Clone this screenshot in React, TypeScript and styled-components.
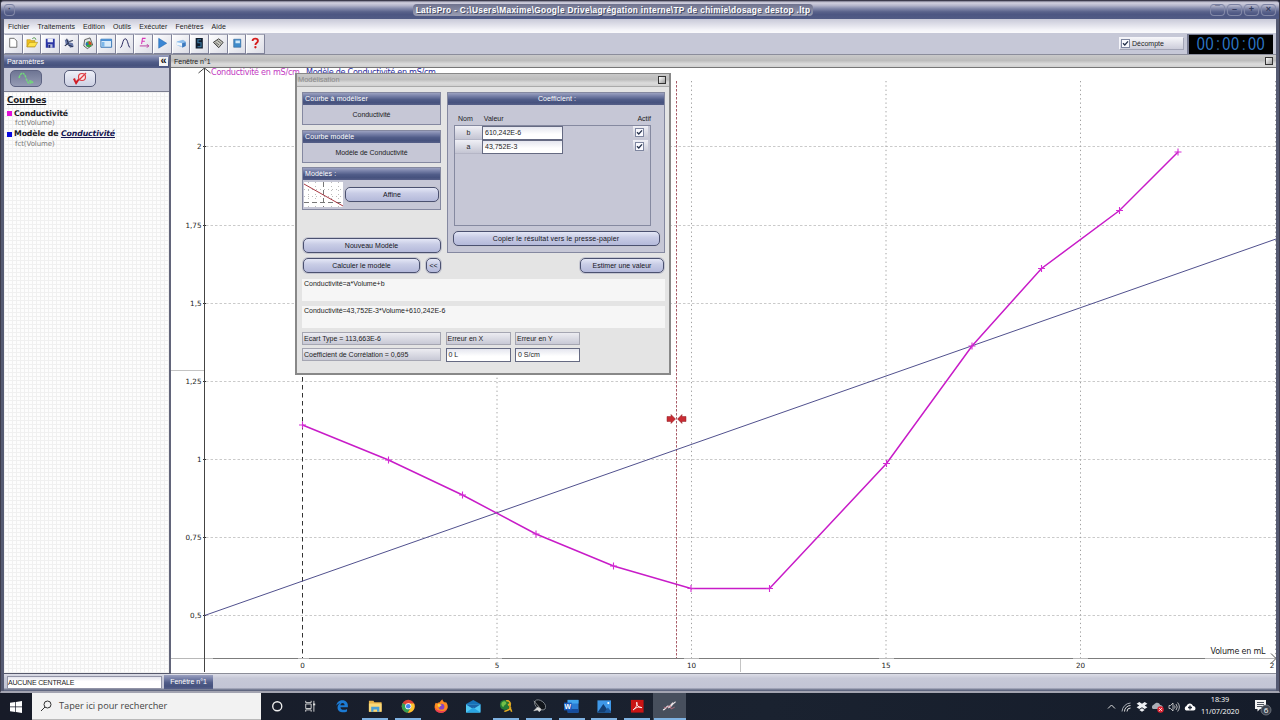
import React from 'react';
import styled, { createGlobalStyle } from 'styled-components';

const sans = '"Liberation Sans", Arial, sans-serif';
const wide = '"DejaVu Sans", Verdana, sans-serif';
const segoe = '"Open Sans", "Noto Sans", sans-serif';
const steel = 'linear-gradient(#9ba1c0 0, #7780a8 25%, #505c88 55%, #46527e 80%, #565f88 100%)';
const silver = 'linear-gradient(#c9c9c9, #bcbcbc 45%, #dcdcdc 75%, #d0d0d0)';

const Global = createGlobalStyle`
  * { box-sizing: border-box; }
  html, body { margin: 0; padding: 0; overflow: hidden; background: #1a1e2a; }
  body { font: 7px/1 ${sans}; color: #1c1c24; white-space: nowrap; }
  svg { display: block; }
`;

const Screen = styled.div`
  width: 1280px;
  height: 720px;
  display: flex;
  flex-direction: column;
  overflow: hidden;
`;

const Frame = styled.div`
  height: 693px;
  display: flex;
  flex-direction: column;
  background: #555a72;
  border: 1px solid #3c3b4c;
  border-bottom: 2px solid #a3a4b1;
  border-radius: 4px 4px 0 0;
  overflow: hidden;
`;

const TitleBar = styled.header`
  height: 18px;
  flex: none;
  display: flex;
  align-items: center;
  padding: 0 3px;
  background: linear-gradient(#76768a 0, #d2d1df 10%, #b5b6cb 25%, #8389aa 42%, #59628b 60%, #4c5682 75%, #515b85 100%);
`;

const TitleLeft = styled.div`
  width: 409px;
  flex: none;
`;

const TitleButtons = styled.div`
  margin-left: auto;
  display: flex;
  gap: 2px;
`;

const TitleText = styled.div`
  width: 400px;
  height: 12px;
  border-radius: 4px;
  background: linear-gradient(#70738e, #9a9db2);
  color: #fff;
  font: bold 8.3px/12px ${sans};
  letter-spacing: 0.33px;
  text-align: center;
  text-shadow: 1px 1px 0 #454b68;
`;

const TitleButton = styled.span<{ $w?: number }>`
  display: block;
  width: ${(p) => p.$w ?? 15}px;
  height: 12px;
  border: 1px solid #8389a8;
  border-top-color: #7a80a1;
  border-radius: 4px;
  color: #353d60;
  font: bold 9px/9px ${sans};
  text-align: center;
`;

const Body = styled.div`
  flex: 1;
  min-height: 0;
  display: flex;
  flex-direction: column;
  margin: 0 3px 0 3px;
  background: #c6c8d7;
`;

const MenuBar = styled.nav`
  height: 14px;
  flex: none;
  display: flex;
  align-items: center;
  gap: 8px;
  padding-left: 4px;
  background: linear-gradient(#c8c9d8, #f3f3f8 75%, #fafafc);
  letter-spacing: 0.07px;
`;

const ToolBar = styled.div`
  height: 22px;
  flex: none;
  display: flex;
  align-items: center;
  border-bottom: 1px solid #8b8d9b;
`;

const ToolButton = styled.div`
  width: 18.65px;
  height: 20px;
  display: flex;
  align-items: center;
  justify-content: center;
  background: linear-gradient(135deg, #fdfdfe, #dcdde6);
  border: 1px solid #80839a;
  border-left-color: #fff;
  border-top-color: #a3a5b5;
`;

const Countdown = styled.label`
  margin-left: auto;
  width: 65px;
  height: 13px;
  display: flex;
  align-items: center;
  gap: 2px;
  padding-left: 1px;
  border: 1px solid #a3a5b6;
  border-top-color: #f5f5fa;
  border-left-color: #f5f5fa;
  background: linear-gradient(#f4f4f8, #cccdda);
`;

const Box = styled.span`
  width: 9px;
  height: 9px;
  border: 1px solid #7e86a0;
  background: #fafaff;
  display: flex;
  align-items: center;
  justify-content: center;
`;

const Clock = styled.div`
  width: 86px;
  height: 20px;
  margin: 0 3px 0 3px;
  background: #000;
  border-left: 2px solid #777b91;
  border-top: 1px solid #777b91;
  display: flex;
  align-items: center;
  justify-content: center;
`;

const ClockDigits = styled.span`
  font: 14.5px/15px ${sans};
  letter-spacing: 0.6px;
  color: #2e78c8;
  transform: scaleY(1.26);
  i { font-style: normal; padding: 0 1.6px 0 2px; color: #26609c; }
`;

const Main = styled.div`
  flex: 1;
  min-height: 0;
  display: flex;
`;

const SidePanel = styled.aside`
  width: 167px;
  flex: none;
  display: flex;
  flex-direction: column;
  border-right: 2px solid #62657a;
  border-bottom: 1px solid #55586c;
`;

const SideHeader = styled.div`
  height: 13px;
  flex: none;
  display: flex;
  align-items: center;
  justify-content: space-between;
  padding: 0 1px 0 3px;
  background: ${steel};
  color: #fff;
  font-size: 7.2px;
`;

const Collapse = styled.span`
  width: 9px;
  height: 9px;
  background: #f4f4f4;
  color: #111;
  font: bold 11px/7px ${sans};
  text-align: center;
`;

const ModeRow = styled.div`
  height: 24px;
  flex: none;
  display: flex;
  gap: 22px;
  padding: 2px 0 0 6px;
  border-bottom: 1px solid #7b7e90;
`;

const ModeButton = styled.div<{ $on?: boolean }>`
  width: 32px;
  height: 17px;
  border-radius: 5px;
  border: 1.5px solid ${(p) => (p.$on ? '#5d6382' : '#555b78')};
  background: ${(p) => (p.$on ? 'linear-gradient(#6f7694, #949ab3)' : 'linear-gradient(#eef0f8, #ccd0e2)')};
  display: flex;
  align-items: center;
  justify-content: center;
`;

const CurveList = styled.div`
  flex: 1;
  padding: 4px 0 0 3px;
  background-color: #fdfdfd;
  background-image: linear-gradient(#f0f0f0 1px, transparent 1px), linear-gradient(90deg, #f0f0f0 1px, transparent 1px);
  background-size: 4px 4px;
  font-family: ${wide};
`;

const CurveHeading = styled.div`
  font: bold 8.8px/9px ${wide};
  text-decoration: underline;
  letter-spacing: -0.2px;
  margin-bottom: 3px;
`;

const CurveName = styled.div`
  display: flex;
  align-items: center;
  gap: 2px;
  height: 11px;
  font-weight: bold;
  font-size: 7.8px;
  letter-spacing: -0.13px;
  i { color: #161652; text-decoration: underline; }
`;

const Swatch = styled.span<{ $color: string }>`
  width: 5px;
  height: 5px;
  background: ${(p) => p.$color};
`;

const CurveSource = styled.div`
  height: 9.7px;
  padding-left: 8px;
  font-size: 7px;
  line-height: 8px;
  letter-spacing: -0.08px;
  color: #777;
`;

const PlotWindow = styled.section`
  flex: 1;
  min-width: 0;
  display: flex;
  flex-direction: column;
  background: #fff;
  border-bottom: 1px solid #8b8d98;
`;

const PlotTitle = styled.div`
  height: 13px;
  flex: none;
  display: flex;
  align-items: center;
  justify-content: space-between;
  padding: 0 3px 0 3px;
  background: ${silver};
  border-bottom: 1px solid #777;
`;

const WindowSquare = styled.span`
  width: 8px;
  height: 8px;
  border: 1px solid #333;
  background: linear-gradient(135deg, #fff, #9a9a9a);
`;

const StatusBar = styled.footer`
  height: 17px;
  flex: none;
  display: flex;
  align-items: flex-start;
  background: linear-gradient(#dcdde7 0, #c6c8d7 25%, #c3c5d5 80%, #606780 95%);
`;

const StatusField = styled.div`
  width: 155px;
  height: 13px;
  margin: 2px 2px 0 3px;
  border: 1px solid #9193a6;
  background: linear-gradient(#e4e4ee, #fff 40%);
  font-size: 7px;
  letter-spacing: -0.18px;
  line-height: 11px;
`;

const StatusTab = styled.div`
  width: 49px;
  height: 14px;
  margin-top: 1px;
  background: ${steel};
  color: #fff;
  text-align: center;
  line-height: 13px;
`;

/* Floating modelling dialog */
const Dialog = styled.div`
  position: absolute;
  left: 295px;
  top: 73px;
  width: 376px;
  height: 302px;
  display: flex;
  flex-direction: column;
  background: #e4e4e4;
  border: 2px solid #888;
  border-top-width: 1px;
`;

const DialogTitle = styled.div`
  height: 13px;
  flex: none;
  display: flex;
  align-items: center;
  justify-content: space-between;
  padding: 0 3px 0 1px;
  background: ${silver};
  border-bottom: 1px solid #aaa;
  color: #8b8b8b;
  font-size: 7.4px;
`;

const DialogBody = styled.div`
  flex: 1;
  padding: 5px 4px 0 5px;
`;

const Columns = styled.div`
  display: flex;
  justify-content: space-between;
  height: 161px;
`;

const LeftColumn = styled.div`
  width: 139px;
  display: flex;
  flex-direction: column;
`;

const Group = styled.div<{ $h: number; $w?: number; $gap?: number }>`
  width: ${(p) => p.$w ?? 139}px;
  height: ${(p) => p.$h}px;
  margin-bottom: ${(p) => p.$gap ?? 0}px;
  border: 1px solid #8488a0;
  background: #c6c7d6;
  display: flex;
  flex-direction: column;
`;

const GroupTitle = styled.div<{ $center?: boolean }>`
  height: 12px;
  flex: none;
  padding-left: 2px;
  background: ${steel};
  color: #fff;
  line-height: 12px;
  letter-spacing: 0.1px;
  text-align: ${(p) => (p.$center ? 'center' : 'left')};
`;

const GroupValue = styled.div`
  flex: 1;
  display: flex;
  align-items: center;
  justify-content: center;
  letter-spacing: -0.05px;
`;

const ModelRow = styled.div`
  flex: 1;
  display: flex;
  align-items: center;
  gap: 2px;
  padding-left: 1px;
`;

const ButtonSlot = styled.div<{ $inset?: boolean }>`
  display: flex;
  justify-content: center;
  padding-bottom: ${(p) => (p.$inset ? 6 : 0)}px;
`;

const Pill = styled.button<{ $w: number; $spread?: number }>`
  width: ${(p) => p.$w}px;
  height: 15px;
  flex: none;
  padding: 0;
  border: 1.5px solid #4b5170;
  border-radius: 5px;
  background: linear-gradient(#e4e7f6, #c9cde6 40%, #b4b9da);
  box-shadow: 0 0 0 1px #c4c5d0;
  color: #15151c;
  font: 7px/12px ${sans};
  letter-spacing: ${(p) => p.$spread ?? 0.03}px;
  text-align: center;
`;

const Spacer = styled.div`
  flex: 1;
`;

const CoeffHead = styled.div`
  display: flex;
  height: 20px;
  padding: 10px 13px 0 10px;
  span:nth-child(2) { margin-left: 11px; flex: 1; }
`;

const CoeffTable = styled.div`
  width: 197px;
  height: 101px;
  margin-left: 6px;
  border: 1px solid #8589a0;
`;

const CoeffRow = styled.div`
  height: 14px;
  display: flex;
  justify-content: space-between;
`;

const Key = styled.div`
  width: 27px;
  height: 14px;
  background: linear-gradient(#f0f0f6, #c4c5d3);
  line-height: 13px;
  text-align: center;
  border-bottom: 1px solid #b5b6c6;
`;

const Field = styled.div<{ $w: number }>`
  width: ${(p) => p.$w}px;
  height: 14px;
  padding-left: 2px;
  border: 1px solid #656a82;
  background: linear-gradient(#e5e6ef, #fff 60%);
  line-height: 12px;
`;

const CheckCell = styled.div`
  width: 15px;
  margin-left: auto;
  margin-right: 2px;
  height: 13px;
  display: flex;
  align-items: center;
  padding-left: 2px;
  background: linear-gradient(#f0f0f6, #c4c5d3);
`;

const ActionRow = styled.div`
  height: 15px;
  margin: 5px 1px 6px 1px;
  display: flex;
  gap: 6px;
`;

const Formula = styled.div`
  height: 22px;
  margin-bottom: 4.5px;
  padding: 1px 2px;
  background: #f6f6f6;
  line-height: 8px;
`;

const Results = styled.div`
  display: grid;
  grid-template-columns: 139px 65px 65px;
  column-gap: 4.5px;
  row-gap: 3px;
  margin-top: 4px;
`;

const Result = styled.div`
  height: 13px;
  padding-left: 1px;
  border: 1px solid #a5a6b2;
  background: linear-gradient(#ececf1, #c8c9d6);
  line-height: 11px;
`;

/* Windows taskbar */
const TaskBar = styled.div`
  height: 27px;
  flex: none;
  display: flex;
  background: linear-gradient(90deg, #171b28, #1a2230 60%, #151c2a);
  color: #fff;
  font-family: ${segoe};
`;

const Start = styled.div`
  width: 32px;
  display: flex;
  align-items: center;
  justify-content: center;
`;

const Search = styled.div`
  width: 229px;
  display: flex;
  align-items: center;
  gap: 7px;
  padding-left: 8px;
  background: #f2f2f2;
  border-bottom: 1px solid #b9b9b9;
  color: #444;
  font-size: 9.2px;
`;

const TaskItem = styled.div<{ $open?: boolean; $active?: boolean }>`
  width: 32.7px;
  display: flex;
  align-items: center;
  justify-content: center;
  background-color: ${(p) => (p.$active ? '#474f5d' : 'transparent')};
  background-image: ${(p) => (p.$open ? 'linear-gradient(#7fb2e2, #7fb2e2)' : 'none')};
  background-size: ${(p) => (p.$active ? '32px' : '26px')} 2px;
  background-repeat: no-repeat;
  background-position: center bottom;
`;

const Tray = styled.div`
  margin-left: auto;
  display: flex;
  align-items: center;
  gap: 4px;
`;

const DateTime = styled.div`
  width: 42px;
  margin: 0 1px 3px -1px;
  text-align: center;
  font-size: 7.3px;
  line-height: 12px;
  letter-spacing: -0.05px;
`;

const Notice = styled.div`
  width: 34px;
  padding-left: 8px;
`;

const Check = () => (
  <svg width="7" height="7" viewBox="0 0 7 7"><path d="M1 3.2 2.8 5 6 1.4" fill="none" stroke="#24304a" strokeWidth="1.3" /></svg>
);

const toolIcons: React.ReactNode[] = [
  <path d="M3 1.5h5l3 3v7H3z" fill="#fff" stroke="#555" strokeWidth=".9" />,
  <><path d="M1 3h4l1 1h4v7H1z" fill="#f0c020" stroke="#b08a10" strokeWidth=".6" /><path d="M1 11 4 6h9l-3 5z" fill="#ffe34a" stroke="#a58210" strokeWidth=".6" /><path d="M7 2c2-2 4-1 4 1" fill="none" stroke="#3a8a30" strokeWidth="1" /></>,
  <><path d="M2 2h10v10H2z" fill="#2b35a5" /><path d="M4 2h6v4H4z" fill="#e9ecf8" /><path d="M4.500 8h5v4h-5z" fill="#b4bddd" /><path d="M5 9h2v3H5z" fill="#1b2170" /></>,
  <><path d="m2 3 4 0 1 3 4 1 1 4-4 1-2-3-3-1z" fill="#6878a8" /><path d="m4 2 2 5-4 3M7 5l4-1M6 9l5 2" stroke="#27304f" fill="none" strokeWidth="1.200" /></>,
  <><path d="M3 3 9 1l3 8-6 4-4-3z" fill="#dfe2e4" stroke="#333" strokeWidth=".8" /><circle cx="7.500" cy="8" r="3.300" fill="#39a844" /><path d="M7.500 8V4.700A3.300 3.300 0 0 1 10.500 9z" fill="#e3401f" /><path d="M7.500 8 4.500 9.500A3.300 3.300 0 0 1 5 6z" fill="#2868c8" /></>,
  <><path d="M1 2.500h12v9H1z" fill="#d9ebfa" stroke="#2b6cae" /><path d="M1 2.500h12v2H1z" fill="#4a90d5" /><path d="M2 5.500h3v5.500H2z" fill="#7db7ea" /></>,
  <path d="M1.500 12C4 11 4 2 7 2s3 9 5.500 10" fill="none" stroke="#26265c" strokeWidth="1.100" />,
  <><path d="M4 8 5 1.500h3.500M4.700 4.700h3" fill="none" stroke="#d838b8" strokeWidth="1.200" /><path d="M2 10h10M10 8l2 2-2 2" fill="none" stroke="#b52d98" strokeWidth="1" /></>,
  <path d="M3 1.500 12 7l-9 5.500z" fill="#3a86d4" stroke="#2567ac" strokeWidth=".6" />,
  <><path d="M2 5 9 3l3 2v5l-6 1-4-2z" fill="#8dbdec" /><path d="m2 6 6 1v3l-6-1z" fill="#f1f7fc" /><path d="m8 7 4-1v4l-4 2z" fill="#3d79be" /></>,
  <><path d="M3 1h8v12H3z" fill="#101c2c" /><path d="M9 3H5.500v3.500H9V11H5" fill="none" stroke="#3c7da8" strokeWidth="1.200" /></>,
  <><path d="m1.500 6 6-4 5 4-5 6z" fill="#c8c8be" stroke="#333" /><path d="m4 6 4 3M6 4l4 3M3 7l4 4" stroke="#555" strokeWidth=".9" /></>,
  <><path d="M3 2.500h8v9H3z" fill="#3f8bca" stroke="#285c90" strokeWidth=".6" /><path d="M5 4h5v3H5z" fill="#cfe8fa" /></>,
  <><path d="M4 4.500C4 1 10 1 10 4.500 10 6.500 7.200 6.500 7.200 9" fill="none" stroke="#d51d1d" strokeWidth="2.100" /><circle cx="7.200" cy="11.500" r="1.300" fill="#d51d1d" /></>,
];

const points: [number, number][] = [
  [302.5, 425], [388.5, 460], [462.5, 495], [536, 534], [613.5, 566], [691, 588.5],
  [769.5, 588.5], [886.5, 463.5], [972, 346], [1041.5, 268.5], [1119.5, 210.5], [1178, 152],
];
const yTicks: [string, number][] = [['2', 146.5], ['1,75', 225.5], ['1,5', 303.5], ['1,25', 381.5], ['1', 459.5], ['0,75', 537.5], ['0,5', 615.5]];
const xTicks: [string, number][] = [['0', 302.5], ['5', 497], ['10', 691.5], ['15', 886], ['20', 1080.5], ['2', 1272]];

const Chart = () => (
  <svg width="1105" height="604" viewBox="171 68 1105 604" fontFamily={wide} fontSize="7.2">
    {yTicks.map(([t, y]) => (
      <g key={t}>
        <path d={`M206 ${y}H1276`} stroke="#cacaca" strokeDasharray="2.500 2" />
        <path d={`M203 ${y}h3`} stroke="#333" />
        <text x="201.500" y={y + 2.6} textAnchor="end" fill="#222">{t}</text>
      </g>
    ))}
    {[497, 691.5, 886, 1080.5, 1275.5].map((x) => (
      <path key={x} d={`M${x} 81V658`} stroke="#a0a0a0" strokeDasharray="1.300 3" />
    ))}
    <path d="M171 370.500h33M740.500 659v13" stroke="#c4c4c4" />
    <path d="M302.500 81V658" stroke="#333" strokeDasharray="4.500 3.500" />
    <path d="M676.500 81V658" stroke="#a85c68" strokeDasharray="2.500 1.500" />
    <path d="M171 658.500H1276" stroke="#b8b8b8" />
    <path d="M213 658.500H298M309 658.500H490M502 658.500H684M699 658.500H879M894 658.500H1073M1088 658.500H1205" stroke="#7c7c7c" />
    <path d="M204.500 68V672M198.500 73l6-5 6 5" fill="none" stroke="#444" />
    <path d="M1271 653.500l5 5-5 5" fill="none" stroke="#555" />
    {xTicks.map(([t, x]) => <text key={x} x={x} y="668" textAnchor="middle" fill="#222">{t}</text>)}
    <text x="211" y="75.300" fontSize="8.100" fill="#c238c2" textLength="89">Conductivité en mS/cm</text>
    <text x="306" y="75.300" fontSize="8.100" fill="#2c2ca0" textLength="130">Modèle de Conductivité en mS/cm</text>
    <text x="1210.500" y="654" fontSize="8" fill="#222" textLength="55">Volume en mL</text>
    <path d="M204.500 615.500 1276 239" stroke="#3c3c80" strokeWidth=".9" />
    <polyline points={points.map((p) => p.join()).join(' ')} fill="none" stroke="#c81cc8" strokeWidth="1.500" />
    {points.map(([x, y]) => <path key={x} d={`M${x - 3.5} ${y}h7M${x} ${y - 3.5}v7`} stroke="#d42cd4" strokeWidth="1.100" />)}
    <path d="M667 416.500h4v-2l4.500 4.500-4.500 4.500v-2h-4zM686 416.500h-4v-2l-4.500 4.500 4.500 4.500v-2h4z" fill="#c92c34" stroke="#8d2027" strokeWidth=".5" />
  </svg>
);

const taskIcons: { open?: boolean; active?: boolean; art: React.ReactNode }[] = [
  { art: <circle cx="8" cy="8" r="5" fill="none" stroke="#eee" strokeWidth="1.500" /> },
  { art: <g stroke="#ddd" fill="none"><path d="M3 5.500h6v5H3zM3 2v2h6V2M3 14v-2h6v2M12 2v12" strokeWidth="1" /><path d="M11 6h2.500" strokeWidth="2" /></g> },
  { art: <path d="M1.500 7.500C2.200 3 5 1.500 8.200 1.500c4 0 6 2.800 6 6V9H6c.2 3.500 4.500 3.600 7.300 2v2.800C8.500 16 2.800 14.300 2.800 9.600 2.800 7 4.300 5.200 6 4.500 4 5 2.500 6 1.500 7.500zM6 6.800h4.600C10.500 3.600 6.300 3.700 6 6.800z" fill="#1c7bd4" fillRule="evenodd" /> },
  { open: true, art: <><path d="M1 2h5l1 1.500h8V14H1z" fill="#e9b44a" /><path d="M1 5h14v9H1z" fill="#fbd978" /><path d="M3.500 8.500h9V14H10v-2.500H6V14H3.500z" fill="#4a9fd8" /></> },
  { open: true, art: <><circle cx="8" cy="8" r="7.200" fill="#e04436" /><path d="M8 8 1.700 4.500A7.200 7.200 0 0 0 7.500 15.200L11 9.500z" fill="#34a050" /><path d="M8 8l3.200 1.700-3.700 5.500A7.200 7.200 0 0 0 14.400 5H8z" fill="#fbc52d" /><circle cx="8" cy="8" r="3.400" fill="#fff" /><circle cx="8" cy="8" r="2.600" fill="#4484ee" /></> },
  { art: <><path d="M2 4l1.500 1C4.500 3.500 6 3.500 6.500 3.500 7 2 8.500.8 9.500.5c0 2 1.500 2.500 3 3.500L13 3c2 2.500 2.500 5 2 7-1 3.500-4 5.200-7 5.200C3 15.200.5 12 .7 8.500.8 6.500 1.300 5 2 4z" fill="#ff8a22" /><path d="M1 9c0 4 3 6.200 7 6.200 3 0 6-2 6.800-5-2 3-4 3-6 3S2 12 1 9z" fill="#ee3b57" /><circle cx="8.300" cy="8.500" r="3.200" fill="#8744c5" /><path d="M4 6c2-1 3 0 4.500.5-1 1.500-2.500 1-2.500 3C4.500 8.500 4 7.500 4 6z" fill="#ffd13b" /></> },
  { art: <><path d="M0 5.500 8 1l8 4.500V14H0z" fill="#1671b8" /><path d="M0 6h16v9H0z" fill="#51c8f4" /><path d="M0 6l8 5 8-5z" fill="#1c64a8" /><path d="M0 15 8 9.500 16 15z" fill="#2aa5e4" /></> },
  { open: true, art: <><circle cx="6.500" cy="6.500" r="5.500" fill="#247a35" /><path d="M3 4c2-2 4-2 5 0s-3 2-3 5c-2-1-3-3-2-5z" fill="#72c048" /><path d="M8 2c4-1 5 3 4 7l2 5M13 9c-2 5-6 3-7 5M10 7l3-3" fill="none" stroke="#e2ac23" strokeWidth="1.700" /></> },
  { open: true, art: <><ellipse cx="9" cy="6.500" rx="7" ry="4.500" transform="rotate(38 9 6.500)" fill="#11151b" stroke="#8b9299" strokeWidth=".9" /><path d="M2 2l6 7M6 9l3 1 1 2-2 2-2-2-4 1 2-2z" fill="#ddd" stroke="#ccc" strokeWidth=".7" /></> },
  { open: true, art: <><path d="M4 1h12v14H4z" fill="#2b7cd3" /><path d="M4 1h12v4H4z" fill="#41a5ee" /><path d="M4 11h12v4H4z" fill="#164b9c" /><path d="M0 4h8.500v8.500H0z" fill="#185abd" /><text x="4.200" y="11" fontSize="7.500" fontWeight="bold" fill="#fff" textAnchor="middle" fontFamily={sans}>W</text></> },
  { open: true, art: <><path d="M.5 1.500h15v13.500H.5z" fill="#3f98e8" /><path d="M.5 15 7 5.500 13.500 15z" fill="#153f73" /><path d="M8 15l4-5.500 3.500 4V15z" fill="#1e5ba0" /><circle cx="12.500" cy="4.500" r="1.200" fill="#fff" /></> },
  { open: true, art: <><path d="M1 1h14v14H1z" fill="#c91414" /><path d="M3.500 12c2-1 5.500-6 4-8.500-1.500 1 1.500 6.500 5.500 6-3-1.500-7 0-9.500 2.500z" fill="none" stroke="#fff" strokeWidth="1" /></> },
  { open: true, active: true, art: <><path d="M1 12c3 0 3-3 5-4s2 3 4 0 2-3 5-5M7 10l5-6" fill="none" stroke="#e9e1e4" strokeWidth="1.200" /><path d="M2 9l3 1 4-3 1 4 4-2" fill="none" stroke="#c86f80" strokeWidth=".8" /></> },
];

export default function App() {
  return (
    <>
      <Global />
      <Screen>
        <Frame>
          <TitleBar>
            <TitleLeft><TitleButton $w={11}>·</TitleButton></TitleLeft>
            <TitleText>LatisPro - C:\Users\Maxime\Google Drive\agrégation interne\TP de chimie\dosage destop .ltp</TitleText>
            <TitleButtons>
              <TitleButton>¯</TitleButton><TitleButton>–</TitleButton><TitleButton>+</TitleButton><TitleButton>×</TitleButton>
            </TitleButtons>
          </TitleBar>
          <Body>
            <MenuBar>
              {['Fichier', 'Traitements', 'Edition', 'Outils', 'Exécuter', 'Fenêtres', 'Aide'].map((m) => <span key={m}>{m}</span>)}
            </MenuBar>
            <ToolBar>
              {toolIcons.map((art, i) => (
                <ToolButton key={i}><svg width="12.500" height="12.500" viewBox="0 0 14 14">{art}</svg></ToolButton>
              ))}
              <Countdown><Box><Check /></Box>Décompte</Countdown>
              <Clock><ClockDigits>00<i>:</i>00<i>:</i>00</ClockDigits></Clock>
            </ToolBar>
            <Main>
              <SidePanel>
                <SideHeader>Paramètres<Collapse>«</Collapse></SideHeader>
                <ModeRow>
                  <ModeButton $on>
                    <svg width="16" height="14" viewBox="0 0 16 14"><path d="M1 6C3-1 6 0 8 6s4 7 6 3M11 9l2.500 0L15 11" fill="none" stroke="#72d67b" strokeWidth="1.500" strokeDasharray="2.500 .7" /></svg>
                  </ModeButton>
                  <ModeButton>
                    <svg width="16" height="14" viewBox="0 0 16 14"><path d="m1 7 3 6 4-6-2 0-2 2-1-3z" fill="#d01c25" /><circle cx="10" cy="5" r="3.500" fill="#fbe3e3" stroke="#dc3c44" strokeWidth="1.200" /><path d="M7 8l7-7" stroke="#dc3c44" strokeWidth="1.200" /></svg>
                  </ModeButton>
                </ModeRow>
                <CurveList>
                  <CurveHeading>Courbes</CurveHeading>
                  <CurveName><Swatch $color="#e010d8" /><span>Conductivité</span></CurveName>
                  <CurveSource>fct(Volume)</CurveSource>
                  <CurveName><Swatch $color="#0808e0" /><span>Modèle de <i>Conductivité</i></span></CurveName>
                  <CurveSource>fct(Volume)</CurveSource>
                </CurveList>
              </SidePanel>
              <PlotWindow>
                <PlotTitle>Fenêtre n°1<WindowSquare /></PlotTitle>
                <Chart />
              </PlotWindow>
            </Main>
            <StatusBar>
              <StatusField>AUCUNE CENTRALE</StatusField>
              <StatusTab>Fenêtre n°1</StatusTab>
            </StatusBar>
          </Body>
        </Frame>
        <TaskBar>
          <Start>
            <svg width="12" height="12" viewBox="0 0 12 12"><path d="M0 1.800 5.300 1v4.600H0zM6 .9 12 0v5.600H6zM0 6.300h5.300V11L0 10.200zM6 6.300h6V12l-6-.9z" fill="#fff" /></svg>
          </Start>
          <Search>
            <svg width="12" height="12" viewBox="0 0 12 12"><circle cx="7.500" cy="4.500" r="3.500" fill="none" stroke="#333" /><path d="M5 7 1 11" stroke="#333" /></svg>
            Taper ici pour rechercher
          </Search>
          {taskIcons.map((t, i) => (
            <TaskItem key={i} $open={t.open} $active={t.active}><svg width="14.500" height="14.500" viewBox="0 0 16 16">{t.art}</svg></TaskItem>
          ))}
          <Tray>
            <svg width="9" height="9" viewBox="0 0 9 9"><path d="M1 6.500 4.500 3 8 6.500" fill="none" stroke="#ddd" /></svg>
            <svg width="12" height="12" viewBox="0 0 12 12"><g fill="none" stroke="#a8adb5"><path d="M2 10.500A9 9 0 0 1 10.500 2" /><path d="M4.500 10.500a6 6 0 0 1 6-6M7 10.500A3.500 3.500 0 0 1 10.500 7" stroke="#ddd" /></g></svg>
            <svg width="12" height="12" viewBox="0 0 12 12"><path d="M3.300 1 6 2.800 8.700 1l2.700 1.800-2.700 1.700 2.700 1.800L8.700 8 6 6.300 3.300 8 .6 6.300l2.700-1.800L.6 2.800zM6 7.200l2.700 1.700L6 10.700 3.300 8.900z" fill="#eef0f4" /></svg>
            <svg width="12" height="12" viewBox="0 0 12 12"><path d="M1 8a2.500 2.500 0 0 1 1-4.500C4 .8 7.500 1.500 8 4c2 0 3 1 3 4z" fill="#a9adb5" /><circle cx="8.500" cy="8.500" r="3.200" fill="#df2634" /><path d="m7.200 7.200 2.600 2.600m0-2.600L7.200 9.800" stroke="#fff" strokeWidth=".9" /></svg>
            <svg width="12" height="12" viewBox="0 0 12 12"><path d="M1 4.500h1.500L5 2v8L2.500 7.500H1zM6.500 4.500q1.200 1.500 0 3M8 3q2.500 3 0 6M9.600 1.500q3.600 4.500 0 9" fill="none" stroke="#ddd" strokeWidth=".8" /></svg>
            <svg width="12" height="12" viewBox="0 0 12 12"><path d="M2 9.500A2.500 2.500 0 0 1 2.500 5C3.500 1.500 8.200 1.500 9 5c3 0 3.400 4.500.5 4.500z" fill="#fff" /><path d="M6 4.500v4M4 6.500h4" stroke="#222a38" strokeWidth="1.400" /></svg>
            <DateTime>18:39<br />11/07/2020</DateTime>
            <Notice>
              <svg width="19" height="18" viewBox="0 0 19 18"><path d="M1 2h11v9H6l-2.500 2.500V11H1z" fill="#f3f3f3" /><path d="M3 4.500h7M3 6.500h7M3 8.500h7" stroke="#222b38" strokeWidth=".8" /><circle cx="12" cy="12" r="5" fill="#3b424e" stroke="#858b94" strokeWidth=".7" /><text x="12" y="14.800" fontSize="8" fill="#fff" textAnchor="middle">6</text></svg>
            </Notice>
          </Tray>
        </TaskBar>
      </Screen>
      <Dialog>
        <DialogTitle>Modélisation<WindowSquare /></DialogTitle>
        <DialogBody>
          <Columns>
            <LeftColumn>
              <Group $h={33} $gap={4.5}><GroupTitle>Courbe à modéliser</GroupTitle><GroupValue>Conductivité</GroupValue></Group>
              <Group $h={33} $gap={4.5}><GroupTitle>Courbe modèle</GroupTitle><GroupValue>Modèle de Conductivité</GroupValue></Group>
              <Group $h={43}>
                <GroupTitle>Modèles :</GroupTitle>
                <ModelRow>
                  <svg width="39" height="25" viewBox="0 0 39 25"><path d="M0 0h39v25H0z" fill="#fff" /><path d="M0 7.500h39M0 14.500h39M4.500 0v25M11.500 0v25M27.500 0v25M34.500 0v25" stroke="#bbb" strokeDasharray="1 3" /><path d="M19.500 0v25M0 20.500h39" stroke="#777" strokeDasharray="5 3" /><path d="M0 2 39 24" stroke="#a83a44" /></svg>
                  <Pill $w={94}>Affine</Pill>
                </ModelRow>
              </Group>
              <Spacer />
              <ButtonSlot><Pill $w={138}>Nouveau Modèle</Pill></ButtonSlot>
            </LeftColumn>
            <Group $h={161} $w={218}>
              <GroupTitle $center>Coefficient :</GroupTitle>
              <CoeffHead><span>Nom</span><span>Valeur</span><span>Actif</span></CoeffHead>
              <CoeffTable>
                <CoeffRow><Key>b</Key><Field $w={81}>610,242E-6</Field><CheckCell><Box><Check /></Box></CheckCell></CoeffRow>
                <CoeffRow><Key>a</Key><Field $w={81}>43,752E-3</Field><CheckCell><Box><Check /></Box></CheckCell></CoeffRow>
              </CoeffTable>
              <Spacer />
              <ButtonSlot $inset><Pill $w={207} $spread={0.16}>Copier le résultat vers le presse-papier</Pill></ButtonSlot>
            </Group>
          </Columns>
          <ActionRow>
            <Pill $w={117}>Calculer le modèle</Pill>
            <Pill $w={15}>&lt;&lt;</Pill>
            <Spacer />
            <Pill $w={84}>Estimer une valeur</Pill>
          </ActionRow>
          <Formula>Conductivité=a*Volume+b</Formula>
          <Formula>Conductivité=43,752E-3*Volume+610,242E-6</Formula>
          <Results>
            <Result>Ecart Type = 113,663E-6</Result><Result>Erreur en X</Result><Result>Erreur en Y</Result>
            <Result>Coefficient de Corrélation = 0,695</Result><Field $w={65}>0 L</Field><Field $w={65}>0 S/cm</Field>
          </Results>
        </DialogBody>
      </Dialog>
    </>
  );
}
